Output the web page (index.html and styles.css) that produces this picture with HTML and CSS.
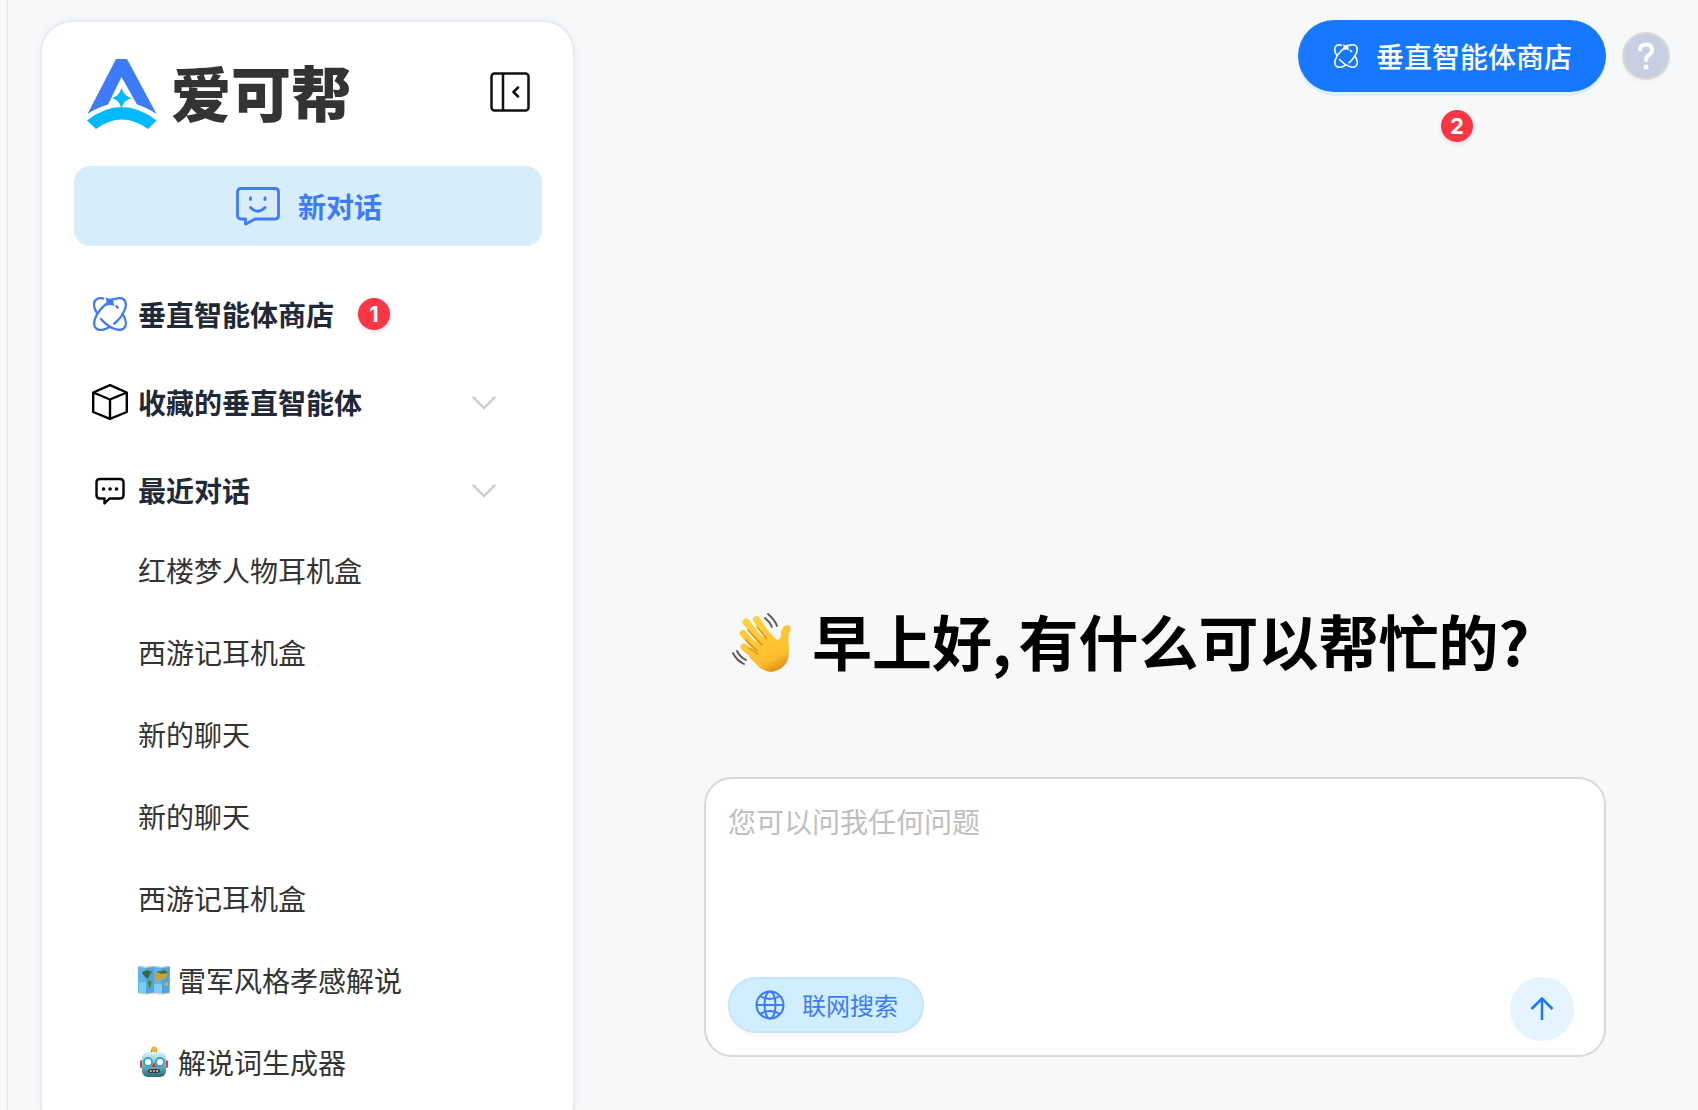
FILE: index.html
```html
<!DOCTYPE html>
<html lang="zh-CN">
<head>
<meta charset="utf-8">
<title>爱可帮</title>
<meta name="viewport" content="width=device-width, initial-scale=1">
<link rel="stylesheet" href="styles.css">
</head>
<body>
<svg class="sprite" aria-hidden="true">
  <symbol id="atom" viewBox="0 0 34 34">
    <g fill="none" stroke="currentColor" stroke-width="2.300">
      <ellipse cx="17" cy="17" rx="20" ry="10" transform="rotate(45 17 17)" pathLength="100" stroke-dasharray="29 5 25 14 4 6 17 0"/>
      <ellipse cx="17" cy="17" rx="20" ry="10" transform="rotate(-45 17 17)" pathLength="100" stroke-dasharray="30 4 48 7 11 0"/>
    </g>
    <path fill="currentColor" d="M12.500 .5C15 2 18 2 21.500 .5C20 3.500 20 6 21.500 9C18 7.500 15 7.500 12.500 9C13.800 6 13.800 3.500 12.500 .5Z"/>
  </symbol>
</svg>
<div class="app">
  <aside class="sidebar">
    <header class="brand-row">
      <a class="brand" href="#">
        <svg class="brand-mark" viewBox="0 0 70 70" aria-hidden="true">
          <path fill="#3d7bf7" d="M29 0H40L69.500 55Q60 48.500 50 45.500L34.500 18L21 45.500Q10 48.500 0.500 55Z"/>
          <path fill="#00baff" d="M34.500 29Q37 37 44.500 39Q37 41 34.500 49Q32 41 25 39Q32 37 34.500 29Z"/>
          <path fill="#00baff" d="M0 61.500Q34.500 34.500 69.500 61.500L61 70Q34.500 51 9 70Z"/>
        </svg>
        <span class="brand-name">爱可帮</span>
      </a>
      <button class="icon-button" type="button" aria-label="收起侧栏">
        <svg width="40" height="40" viewBox="0 0 40 40" fill="none" stroke="#111" stroke-width="2.500" stroke-linecap="round" stroke-linejoin="round"><rect x="1.500" y="1.500" width="37" height="37" rx="3"/><path d="M13 2V38M28 15.500L23.500 20L28 24.500"/></svg>
      </button>
    </header>
    <button class="new-chat" type="button">
      <svg width="44" height="40" viewBox="0 0 44 40" fill="none" stroke="currentColor" stroke-width="2.800" stroke-linecap="round" stroke-linejoin="round"><path d="M5 2.500H39Q42.500 2.500 42.500 6V29.500Q42.500 33 39 33H19L9.500 38.200V33H5Q1.500 33 1.500 29.500V6Q1.500 2.500 5 2.500Z"/><path d="M14.500 12V13.500M29 12V13.500M14.500 21.500Q21.500 29 29 21.500"/></svg>
      新对话
    </button>
    <nav class="nav">
      <a class="nav-row" href="#"><svg class="nav-icon accent" viewBox="-1 -1 36 36"><use href="#atom" width="34" height="34"/></svg>垂直智能体商店<span class="badge">1</span></a>
      <button class="nav-row" type="button"><svg class="nav-icon" viewBox="0 0 36 36" fill="none" stroke="#000" stroke-width="2.400" stroke-linejoin="round"><path d="M18 1.200L34.800 8.500V28L18 34.800L1.200 28V8.500ZM1.200 8.500L18 15.500L34.800 8.500M18 15.500V34.800"/></svg>收藏的垂直智能体<svg class="chevron" viewBox="0 0 24 16"><path d="M1.500 3.500L12 14L22.500 3.500"/></svg></button>
      <button class="nav-row" type="button"><svg class="nav-icon" viewBox="0 0 36 36" fill="none" stroke="#000" stroke-width="2.400" stroke-linejoin="round"><path d="M8 7H28Q31.500 7 31.500 10.500V23Q31.500 26.500 28 26.500H17.500L12.500 31.500V26.500H8Q4.500 26.500 4.500 23V10.500Q4.500 7 8 7Z"/><path d="M11.500 17H11.600M18 17H18.100M24.500 17H24.600" stroke-width="3.500" stroke-linecap="round"/></svg>最近对话<svg class="chevron" viewBox="0 0 24 16"><path d="M1.500 3.500L12 14L22.500 3.500"/></svg></button>
    </nav>
    <ul class="history">
      <li><a href="#">红楼梦人物耳机盒</a></li>
      <li><a href="#">西游记耳机盒</a></li>
      <li><a href="#">新的聊天</a></li>
      <li><a href="#">新的聊天</a></li>
      <li><a href="#">西游记耳机盒</a></li>
      <li><a href="#">
        <svg class="emoji" viewBox="0 0 32 32"><path fill="#5bb4ee" d="M0 2L8 3L16 2L24 3L32 2L31.500 29L24 30L16 29L8 30L0 29Z"/><path fill="#3f93cf" d="M8 3L16 2V29L8 30ZM24 3L32 2L31.500 29L24 30Z" opacity=".5"/><path fill="#8fd3fa" d="M1 18H8V29H1ZM16 20H24V29L16 29Z" opacity=".7"/><path fill="#3d6a3c" d="M4 8L9 6L14 8L11 12L10 15L6 12Z"/><path fill="#4e8a3e" d="M10 16L14 18L12 25L10 21Z"/><path fill="#c9a23c" d="M16 10L22 7L30 8L28 14L24 16L21 14L20 20L17 15Z"/><path fill="#47743a" d="M18 8L27 6L30 9L24 10Z"/><path fill="#e0a438" d="M26 19L30 18L30 22L27 22Z"/><path fill="none" stroke="#d9c8a8" d="M0 2.500L8 3.500L16 2.500L24 3.500L32 2.500M0 29L8 30L16 29L24 30L32 29"/></svg>雷军风格孝感解说</a></li>
      <li><a href="#">
        <svg class="emoji" viewBox="0 0 32 32"><defs><linearGradient id="robot" x2="0" y2="1"><stop stop-color="#dcf3f4"/><stop offset=".5" stop-color="#7fb9c4"/><stop offset="1" stop-color="#1f6a7e"/></linearGradient></defs><path fill="#2f4a58" d="M13 4H19V7H13Z"/><circle cx="16" cy="3.500" r="3" fill="#f0b230"/><rect x="2" y="14" width="28" height="8" rx="1.500" fill="#d7434a"/><rect x="4" y="6" width="24" height="25" rx="6" fill="url(#robot)"/><circle cx="10" cy="16" r="4" fill="#fff" stroke="#23a7d8" stroke-width="1.800"/><circle cx="22" cy="16" r="4" fill="#fff" stroke="#23a7d8" stroke-width="1.800"/><path fill="#e0343c" d="M16 16L18.500 21H13.500Z"/><rect x="10" y="23" width="12" height="4" rx="2" fill="#3a3a3a"/><path stroke="#fff" stroke-width="1.500" d="M12 25H13.500M15.300 25H16.700M18.500 25H20"/></svg>解说词生成器</a></li>
    </ul>
  </aside>
  <main class="main">
    <header class="topbar">
      <div class="store">
        <button class="store-button" type="button"><svg width="24" height="24"><use href="#atom" width="24" height="24"/></svg>垂直智能体商店</button>
        <span class="badge">2</span>
      </div>
      <button class="help" type="button" aria-label="帮助"><svg width="18" height="28" viewBox="0 0 18 28" fill="none" stroke="#fff" stroke-width="4" stroke-linecap="round" stroke-linejoin="round"><path d="M3 7.500Q3.500 2.500 9 2.500Q15 2.500 15 8Q15 11 12 13Q9 15 9 18"/><path d="M9 25V25.100" stroke-width="5"/></svg></button>
    </header>
    <section class="prompt">
      <h1 class="greeting">
        <svg class="wave" viewBox="0 0 60 60" aria-hidden="true"><defs><linearGradient id="skin" gradientUnits="userSpaceOnUse" x1="20" y1="6" x2="46" y2="60"><stop stop-color="#ffd23e"/><stop offset=".75" stop-color="#fcbd2e"/><stop offset="1" stop-color="#dd8414"/></linearGradient></defs>
          <g stroke="url(#skin)" stroke-width="7" stroke-linecap="round"><path d="M14 9L32 32M24.500 6.500L39 28M11 20.500L29 40M12 34L27 46" /></g>
          <path fill="url(#skin)" d="M28 24L38 20L45 27Q49 26 49 20Q50 12 56 12Q60 13 58 18Q56 22 56.500 29Q58 42 55 49Q49 58 39 59Q34 59 27 54L17 44L20 34Z"/>
          <path fill="none" stroke="#dd8c16" stroke-width="1.300" stroke-linecap="round" d="M16 17L30 32M25 14L34.500 25.500M14 27L25 38M17 35L26 41"/>
          <path fill="none" stroke="#555" stroke-width="1.800" stroke-linecap="round" d="M33 5Q38 9 40 14M36 1Q43 7 45 13M5 38Q8 44 14 47M1 40Q5 48 12 51"/></svg>
        <span class="greeting-text"><span>早上好,</span> <span>有什么可以帮忙的?</span></span>
      </h1>
      <form class="composer">
        <textarea aria-label="问题" placeholder="您可以问我任何问题"></textarea>
        <div class="composer-actions">
          <button class="web-search" type="button"><svg width="30" height="30" viewBox="0 0 30 30" fill="none" stroke="currentColor" stroke-width="2"><circle cx="15" cy="15" r="13.500"/><ellipse cx="15" cy="15" rx="5.500" ry="13.500"/><path d="M1.500 15H28.500M5 6Q15 12 25 6M5 24Q15 18 25 24"/></svg>联网搜索</button>
          <button class="send" type="button" aria-label="发送"><svg width="24" height="24" viewBox="0 0 24 24" fill="none" stroke="currentColor" stroke-width="2.500"><path d="M12 23V1M1.500 12L12 1.500L22.500 12"/></svg></button>
        </div>
      </form>
    </section>
  </main>
</div>
</body>
</html>
```
FILE: styles.css
```css
* { box-sizing: border-box; }

body {
  margin: 0;
  background: #f7f8fa;
  color: #333;
  font: 28px/40px "Noto Sans CJK SC", sans-serif;
}

button, textarea { font: inherit; color: inherit; border: 0; padding: 0; background: none; }
button { cursor: pointer; }
a { color: inherit; text-decoration: none; }
svg { flex: none; display: block; }
.sprite { position: absolute; width: 0; height: 0; }

.app {
  display: flex;
  height: 100vh;
  margin-left: 7px;
  border-left: 1px solid #e3e4e7;
  overflow: hidden;
}

/* Sidebar */
.sidebar {
  flex: 0 0 535px;
  margin: 20px 0 0 32px;
  padding: 0 31px 0 32px;
  background: #fff;
  border: 2px solid #e7eaf0;
  border-bottom: 0;
  border-radius: 32px 32px 0 0;
  box-shadow: 0 0 12px rgba(30, 50, 90, 0.03);
}

.brand-row {
  display: flex;
  align-items: center;
  justify-content: space-between;
  height: 144px;
  padding: 0 12px 0 13px;
}
.brand { display: flex; align-items: center; gap: 14px; }
.brand-mark { width: 70px; height: 70px; }
.brand-name { padding-bottom: 6px; font-size: 60px; line-height: 72px; font-weight: 900; }
.icon-button { padding-bottom: 4px; }

.new-chat {
  display: flex;
  align-items: center;
  justify-content: center;
  gap: 18px;
  width: 100%;
  height: 80px;
  padding-left: 2px;
  border-radius: 16px;
  background: #d8edfc;
  color: #3d7bf7;
  font-weight: 700;
}

.nav { padding-top: 24px; }
.nav-row {
  display: flex;
  align-items: center;
  width: 100%;
  height: 88px;
  padding: 0 46px 0 18px;
  color: #1f2937;
  font-weight: 700;
}
.nav-icon { width: 36px; height: 36px; margin-right: 10px; }
.accent { color: #3d7bf7; }
.nav-row .badge { margin-left: 24px; }
.chevron { width: 24px; height: 16px; margin-left: auto; fill: none; stroke: #ccc; stroke-width: 2.4; stroke-linecap: round; }

.badge {
  display: block;
  width: 32px;
  height: 32px;
  border-radius: 50%;
  background: #fa3545;
  box-shadow: 0 2px 4px rgba(0, 0, 0, 0.12);
  color: #fff;
  font: 700 22px/32px Inter, sans-serif;
  text-align: center;
}

.history { margin: -5px 0 0; padding: 0 0 0 64px; list-style: none; }
.history a { display: flex; align-items: center; height: 82px; white-space: nowrap; }
.emoji { width: 32px; height: 32px; margin-right: 8px; }

/* Main area */
.main {
  flex: 1;
  min-width: 0;
  display: flex;
  flex-direction: column;
  justify-content: space-between;
  padding: 20px 28px 53px 129px;
}
.topbar { display: flex; justify-content: flex-end; gap: 16px; }
.store { display: flex; flex-direction: column; align-items: center; gap: 18px; }
.store .badge { margin-left: 10px; }
.store-button {
  display: flex;
  align-items: center;
  gap: 18px;
  height: 72px;
  padding: 0 34px 0 36px;
  border-radius: 36px;
  background: #1677ff;
  box-shadow: 0 4px 0 #e0effd;
  color: #fff;
  font-weight: 500;
}
.help {
  display: flex;
  align-items: center;
  justify-content: center;
  width: 48px;
  height: 48px;
  margin-top: 12px;
  border: 2px solid #d9d9d9;
  border-radius: 50%;
  background: #c8cfe2;
  box-shadow: 0 4px 0 #f3f4f5;
}

.prompt { padding-right: 64px; }
.greeting {
  display: flex;
  align-items: center;
  gap: 20px;
  margin: 0 0 89px;
  padding-left: 28px;
  color: #000;
  font-size: 60px;
  line-height: 84px;
  font-weight: 700;
  white-space: nowrap;
}
.greeting-text { display: flex; gap: 7px; padding-bottom: 6px; }
.wave { width: 60px; height: 60px; }

.composer {
  display: flex;
  flex-direction: column;
  height: 280px;
  padding: 22px 30px 14px 22px;
  border: 2px solid #d9d9d9;
  border-radius: 28px;
  background: #fff;
}
.composer textarea { flex: 1; width: 100%; outline: 0; resize: none; }
.composer textarea::placeholder { color: #bfbfbf; opacity: 1; }
.composer-actions { display: flex; justify-content: space-between; align-items: flex-start; }
.web-search {
  display: flex;
  align-items: center;
  gap: 17px;
  height: 56px;
  padding: 0 24px 0 25px;
  border: 2px solid #c6e4fd;
  border-radius: 28px;
  background: #d1eeff;
  box-shadow: 0 4px 0 #fafafa;
  color: #3d7bf7;
  font-size: 24px;
}
.send {
  display: flex;
  align-items: center;
  justify-content: center;
  width: 64px;
  height: 64px;
  border-radius: 50%;
  background: #e6f4ff;
  color: #1677ff;
}
```
